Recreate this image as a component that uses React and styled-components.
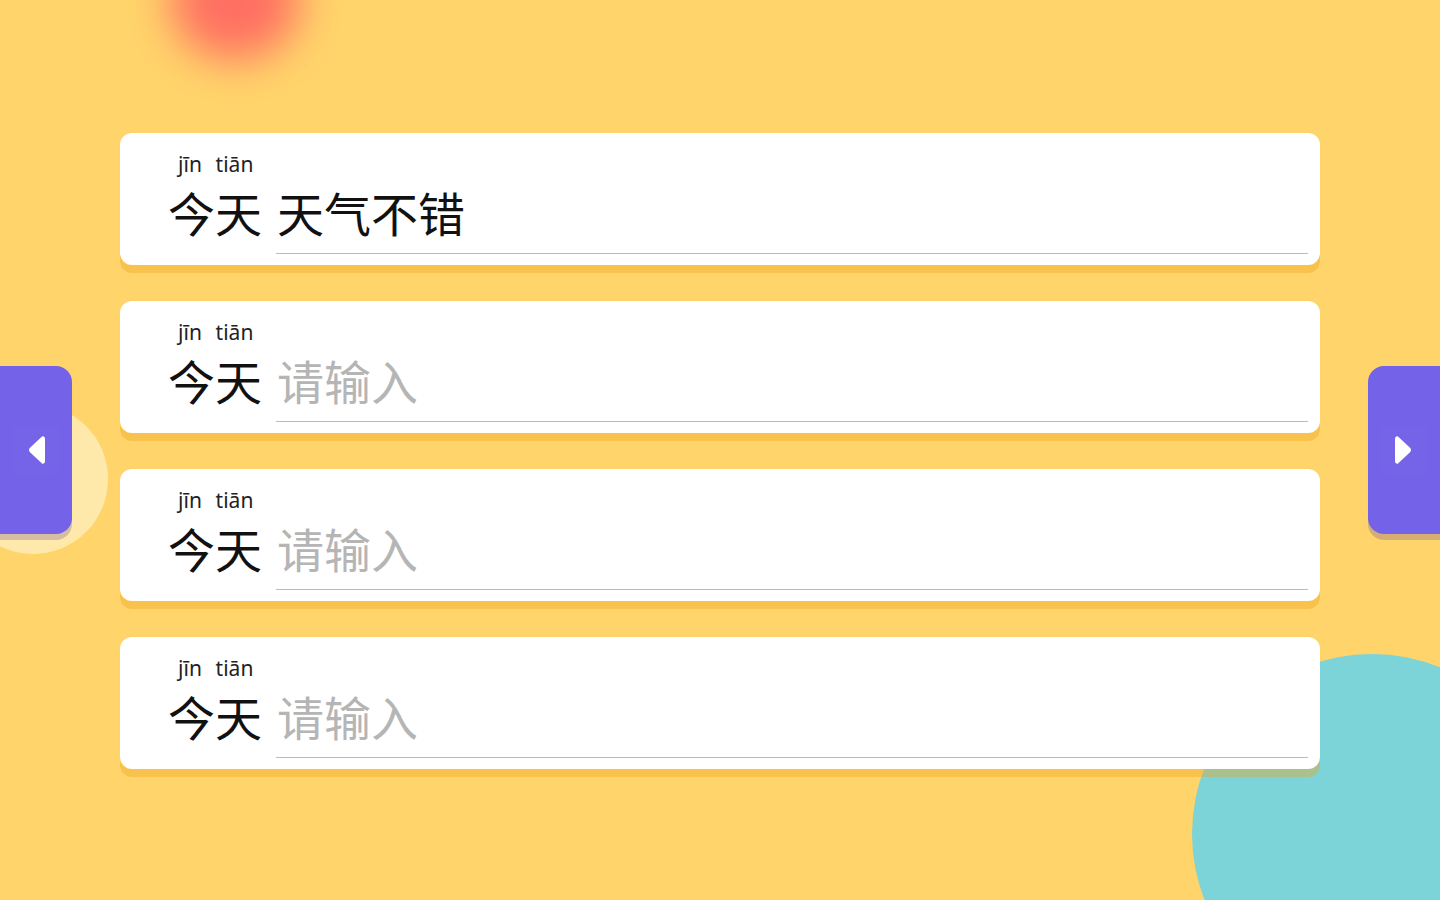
import React, { useState } from "react"
import styled, { createGlobalStyle } from "styled-components"

const GlobalStyle = createGlobalStyle`
  html, body {
    margin: 0;
    padding: 0;
    height: 100%;
    overflow: hidden;
  }
  body {
    font-family: "Noto Sans", "Noto Sans CJK SC", sans-serif;
  }
`

const Page = styled.div`
  position: relative;
  width: 100vw;
  height: 100vh;
  overflow: hidden;
  background-color: #ffd56b;
`

const Glow = styled.div`
  position: absolute;
  left: 170px;
  top: -60px;
  width: 130px;
  height: 120px;
  border-radius: 50%;
  background-color: #ff6f62;
  filter: blur(22px);
`

const Bubble = styled.div`
  position: absolute;
  border-radius: 50%;
  left: ${(p) => p.x - p.r}px;
  top: ${(p) => p.y - p.r}px;
  width: ${(p) => p.r * 2}px;
  height: ${(p) => p.r * 2}px;
  background-color: ${(p) => p.color};
`

const List = styled.div`
  position: relative;
  width: 1200px;
  margin: 0 auto;
  padding-top: 133px;
  display: flex;
  flex-direction: column;
  gap: 36px;
`

const Card = styled.div`
  height: 132px;
  box-sizing: border-box;
  display: flex;
  align-items: flex-end;
  padding: 0 12px 11px 48px;
  background-color: #fff;
  border-radius: 12px;
  box-shadow: 0 8px 0 rgba(239, 165, 30, 0.4);
`

const Word = styled.div`
  display: flex;
  margin-bottom: 14px;
`

const Syllable = styled.div`
  width: 47px;
  display: flex;
  flex-direction: column;
  align-items: center;
`

const Pinyin = styled.span`
  font-family: "Noto Sans", sans-serif;
  font-size: 21px;
  line-height: 24px;
  color: #222;
  margin-bottom: 8px;
  margin-left: ${(p) => (p.first ? "-3px" : "-8px")};
`

const Han = styled.span`
  font-family: "Noto Sans CJK SC", sans-serif;
  font-size: 47px;
  line-height: 56px;
  color: #111;
`

const Field = styled.input`
  flex: 1;
  min-width: 0;
  margin-left: 14px;
  height: 70px;
  box-sizing: border-box;
  padding: 0 0 14px 1px;
  border: none;
  border-bottom: 1px solid #bbb;
  outline: none;
  background: transparent;
  font-family: "Noto Sans CJK SC", sans-serif;
  font-size: 47px;
  line-height: 56px;
  color: #111;

  &::placeholder {
    color: #b5b5b5;
  }
`

const NavButton = styled.button`
  position: absolute;
  top: 366px;
  ${(p) => (p.side === "left" ? "left: 0;" : "right: 0;")}
  width: 72px;
  height: 168px;
  border: none;
  padding: 0;
  cursor: pointer;
  background-color: #7462e8;
  border-radius: ${(p) => (p.side === "left" ? "0 16px 16px 0" : "16px 0 0 16px")};
  box-shadow: 0 6px 0 rgba(90, 60, 140, 0.25);
  display: flex;
  align-items: center;
  justify-content: center;
`

const IconBox = styled.span`
  width: 48px;
  height: 48px;
  display: flex;
  align-items: center;
  justify-content: center;
  background-color: rgba(255, 255, 255, 0.015);
`

const Arrow = ({ dir }) => (
  <svg width="20" height="32" viewBox="0 0 20 32">
    {dir === "left" ? (
      <path
        d="M16 2.5 Q19 1.5 19 5 L19 27 Q19 30.5 16 29.5 L4 18.2 Q2 16 4 13.8 Z"
        fill="#fff"
      />
    ) : (
      <path
        d="M4 2.5 Q1 1.5 1 5 L1 27 Q1 30.5 4 29.5 L16 18.2 Q18 16 16 13.8 Z"
        fill="#fff"
      />
    )}
  </svg>
)

const rows = [
  { id: 1, value: "天气不错" },
  { id: 2, value: "" },
  { id: 3, value: "" },
  { id: 4, value: "" },
]

const syllables = [
  { py: "jīn", han: "今" },
  { py: "tiān", han: "天" },
]

const App = () => {
  const [answers, setAnswers] = useState(rows)

  const handleChange = (id, value) => {
    setAnswers(answers.map((row) => (row.id === id ? { ...row, value } : row)))
  }

  return (
    <Page>
      <GlobalStyle />
      <Glow />
      <Bubble x={33} y={479} r={75} color="#ffe9aa" />
      <Bubble x={1372} y={834} r={180} color="#7cd3d8" />
      <List>
        {answers.map((row) => (
          <Card key={row.id}>
            <Word>
              {syllables.map((s, i) => (
                <Syllable key={s.han}>
                  <Pinyin first={i === 0}>{s.py}</Pinyin>
                  <Han>{s.han}</Han>
                </Syllable>
              ))}
            </Word>
            <Field
              value={row.value}
              placeholder="请输入"
              onChange={(e) => handleChange(row.id, e.target.value)}
            />
          </Card>
        ))}
      </List>
      <NavButton side="left">
        <IconBox>
          <Arrow dir="left" />
        </IconBox>
      </NavButton>
      <NavButton side="right">
        <IconBox>
          <Arrow dir="right" />
        </IconBox>
      </NavButton>
    </Page>
  )
}

export default App
